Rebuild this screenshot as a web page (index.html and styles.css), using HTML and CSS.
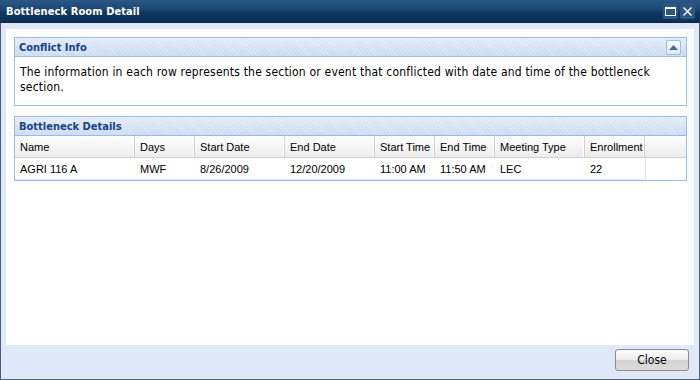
FILE: index.html
```html
<!DOCTYPE html>
<html>
<head>
<meta charset="utf-8">
<link rel="stylesheet" href="styles.css">
</head>
<body>
<div class="window">
  <div class="titlebar">
    <span class="title">Bottleneck Room Detail</span>
    <div class="tools">
      <span class="tool"><svg width="11" height="9" viewBox="0 0 11 9"><rect x="0.5" y="0.5" width="10" height="8" fill="none" stroke="#fff" stroke-width="1"/><rect x="0" y="0" width="11" height="2" fill="#fff"/></svg></span>
      <span class="tool"><svg width="9" height="9" viewBox="0 0 9 9"><path d="M0.5 0.5 L8.5 8.5 M8.5 0.5 L0.5 8.5" stroke="#fff" stroke-width="1.4"/></svg></span>
    </div>
  </div>
  <div class="winbody">
    <div class="content">
      <section class="panel info">
        <div class="panel-head">
          <span class="panel-title">Conflict Info</span>
          <span class="collapse"><svg width="9" height="5" viewBox="0 0 9 5"><path d="M0 5 L4.5 0 L9 5 Z" fill="#3c6e8a"/></svg></span>
        </div>
        <div class="panel-body">The information in each row represents the section or event that conflicted with date and time of the bottleneck section.</div>
      </section>
      <section class="panel grid">
        <div class="panel-head">
          <span class="panel-title">Bottleneck Details</span>
        </div>
        <div class="grid-head">
          <div class="cell c1">Name</div>
          <div class="cell c2">Days</div>
          <div class="cell c3">Start Date</div>
          <div class="cell c3">End Date</div>
          <div class="cell c2">Start Time</div>
          <div class="cell c2">End Time</div>
          <div class="cell c3">Meeting Type</div>
          <div class="cell c2">Enrollment</div>
          <div class="cell filler"></div>
        </div>
        <div class="grid-row">
          <div class="cell c1">AGRI 116 A</div>
          <div class="cell c2">MWF</div>
          <div class="cell c3">8/26/2009</div>
          <div class="cell c3">12/20/2009</div>
          <div class="cell c2">11:00 AM</div>
          <div class="cell c2">11:50 AM</div>
          <div class="cell c3">LEC</div>
          <div class="cell c2">22</div>
        </div>
      </section>
    </div>
    <div class="footer">
      <button class="btn">Close</button>
    </div>
  </div>
</div>
</body>
</html>
```
FILE: styles.css
```css
html, body {
  margin: 0;
  padding: 0;
}
body {
  width: 700px;
  height: 380px;
  overflow: hidden;
  font-family: "DejaVu Sans Condensed", "DejaVu Sans", sans-serif;
}
.window {
  width: 700px;
  height: 380px;
  box-sizing: border-box;
  border: 1px solid #4a5c7c;
  border-top: none;
  display: flex;
  flex-direction: column;
  background: #dfe8f6;
}
.titlebar {
  height: 23px;
  margin: 0 -1px;
  display: flex;
  align-items: center;
  justify-content: space-between;
  padding: 0 5px 0 6px;
  background: linear-gradient(#2b5886 0%, #1b4673 45%, #0f3760 55%, #0c2f55 100%);
  border-bottom: 1px solid #0a2748;
  box-sizing: border-box;
}
.title {
  color: #fff;
  font-weight: bold;
  font-size: 11px;
  letter-spacing: 0.1px;
}
.tools {
  display: flex;
  gap: 2px;
}
.tool {
  width: 15px;
  height: 15px;
  border-radius: 2px;
  background: #2c5782;
  display: flex;
  align-items: center;
  justify-content: center;
}
.winbody {
  flex: 1;
  display: flex;
  flex-direction: column;
  padding: 6px 5px 0 5px;
}
.content {
  height: 316px;
  background: #fff;
  padding: 8px 7px 0 8px;
  box-sizing: border-box;
}
.panel {
  border: 1px solid #99bbe8;
}
.panel.info {
  margin-bottom: 10px;
}
.panel-head {
  height: 18px;
  border-bottom: 1px solid #99bbe8;
  display: flex;
  align-items: center;
  justify-content: space-between;
  padding: 0 5px 0 4px;
  background:
    repeating-linear-gradient(45deg, rgba(255,255,255,0.25) 0 1px, rgba(255,255,255,0) 1px 3px),
    linear-gradient(#e3ebf7, #cbdaf0);
}
.panel-title {
  color: #15428b;
  font-weight: bold;
  font-size: 11px;
}
.collapse {
  width: 13px;
  height: 13px;
  border: 1px solid #99bbe8;
  border-radius: 2px;
  background: linear-gradient(#fbfdff, #dde8f5);
  display: flex;
  align-items: center;
  justify-content: center;
}
.panel-body {
  height: 48px;
  box-sizing: border-box;
  padding: 8px 5px 0 5px;
  font-size: 12px;
  letter-spacing: 0.2px;
  line-height: 15px;
  color: #000;
}
.grid-head, .grid-row {
  display: flex;
  font-family: "Liberation Sans", Arial, sans-serif;
  font-size: 11px;
  color: #000;
}
.grid-head {
  height: 22px;
  background: linear-gradient(#ffffff, #f6f6f6 50%, #ececec);
  border-bottom: 1px solid #d0d0d0;
  box-sizing: border-box;
}
.grid-head .cell {
  border-right: 1px solid #d0d0d0;
  box-shadow: inset -1px 0 0 #fff;
}
.grid-head .filler {
  flex: 1;
  border-right: none;
  box-shadow: none;
}
.grid-row {
  height: 22px;
  width: 631px;
  box-sizing: border-box;
  border-right: 1px solid #e4e4e4;
  border-bottom: 1px solid #ededed;
}
.cell {
  box-sizing: border-box;
  padding: 0 0 0 5px;
  display: flex;
  align-items: center;
  white-space: nowrap;
  overflow: hidden;
}
.c1 { width: 120px; }
.c2 { width: 60px; }
.c3 { width: 90px; }
.footer {
  flex: 1;
  display: flex;
  justify-content: flex-end;
  align-items: flex-start;
  padding: 4px 5px 0 0;
}
.btn {
  width: 74px;
  height: 22px;
  border: 1px solid #8c8c8c;
  border-radius: 3px;
  background: linear-gradient(#fbfbfb 0%, #ececec 50%, #d4d4d4 51%, #dcdcdc 100%);
  font-family: "DejaVu Sans Condensed", "DejaVu Sans", sans-serif;
  font-size: 12px;
  color: #000;
  padding: 0;
}
```
